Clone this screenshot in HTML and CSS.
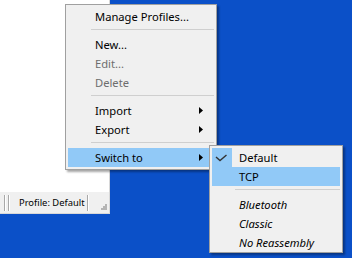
FILE: index.html
```html
<!DOCTYPE html>
<html>
<head>
<meta charset="utf-8">
<title>Switch Profile</title>
<link rel="stylesheet" href="styles.css">
</head>
<body>
<div class="desk">
	<div class="win">
		<div class="client"></div>
		<div class="status">
			<span class="bars"><i></i><i></i></span>
			<span class="pane">Profile: Default</span>
			<span class="bars"><i></i></span>
			<svg class="sizer" width="6" height="6" viewBox="0 0 6 6">
				<rect x="4" y="0" width="2" height="2" fill="#b4b4b4"/>
				<rect x="0" y="4" width="2" height="2" fill="#b4b4b4"/>
				<rect x="2" y="2" width="4" height="4" fill="#b4b4b4"/>
			</svg>
		</div>
	</div>

	<div class="menu main-menu">
		<div class="item">Manage Profiles...</div>
		<div class="sep"></div>
		<div class="item">New...</div>
		<div class="item off">Edit...</div>
		<div class="item off">Delete</div>
		<div class="sep"></div>
		<div class="item">Import <svg class="arrow" width="4" height="7" viewBox="0 0 4 7"><polygon points="0,0 4,3.5 0,7" fill="#000"/></svg></div>
		<div class="item">Export <svg class="arrow" width="4" height="7" viewBox="0 0 4 7"><polygon points="0,0 4,3.5 0,7" fill="#000"/></svg></div>
		<div class="sep"></div>
		<div class="item hot">Switch to <svg class="arrow" width="4" height="7" viewBox="0 0 4 7"><polygon points="0,0 4,3.5 0,7" fill="#000"/></svg></div>
	</div>

	<div class="menu sub-menu">
		<div class="item">
			<span class="check"><svg width="20" height="19" viewBox="0 0 20 19"><polyline points="4,9 8,12.5 14.5,7" fill="none" stroke="#333" stroke-width="1.4"/></svg></span>
			Default
		</div>
		<div class="item hot">TCP</div>
		<div class="sep"></div>
		<div class="item glob">Bluetooth</div>
		<div class="item glob">Classic</div>
		<div class="item glob">No Reassembly</div>
	</div>
</div>
</body>
</html>
```

FILE: styles.css
```css
body {margin:0; background:#0b50c8; font:11.2px "Noto Sans", "Open Sans", sans-serif; color:#000;}

.desk {position:relative; width:352px; height:258px; overflow:hidden;}

/* the window behind the menus */
.win {position:absolute; left:0; top:0; width:110px; height:214px; box-sizing:border-box; border-right:1px solid #d8d8d8; border-bottom:1px solid #d8d8d8; background:#fff; display:flex; flex-direction:column;}
.client {flex:1;}
.status {height:21px; background:#f0f0f0; display:flex; align-items:center; padding-left:4px; white-space:nowrap; font-size:9.4px;}
.bars {display:flex; gap:2px; height:16px; flex-shrink:0;}
.bars i {width:1px; border-right:1px solid #fff; background:#a8a8a8;}
.pane {width:68px; padding-left:9px; line-height:16px; flex-shrink:0;}
.sizer {margin:9px 0 0 12px; flex-shrink:0;}

/* popup menus */
.menu {position:absolute; box-sizing:border-box; background:#f0f0f0; border:1px solid #a0a0a0; padding:2px; box-shadow:2px 2px 2px rgba(0,0,0,0.35);}
.main-menu {left:65px; top:4px; width:152px;}
.sub-menu {left:209px; top:145px; width:134px; padding-bottom:0;}

.item {position:relative; height:19px; line-height:19px; padding-left:27px; white-space:nowrap;}
.item.off {color:#6d6d6d;}
.item.hot {background:#91c9f7;}
.item.glob {font-style:italic;}
.arrow {position:absolute; right:11px; top:6px;}
.check {position:absolute; left:0; top:0; width:20px; height:19px; background:#91c9f7;}
.check svg {display:block;}

.sep {height:1px; margin:3px 0 5px 23px; background:#cfcfcf;}
```
